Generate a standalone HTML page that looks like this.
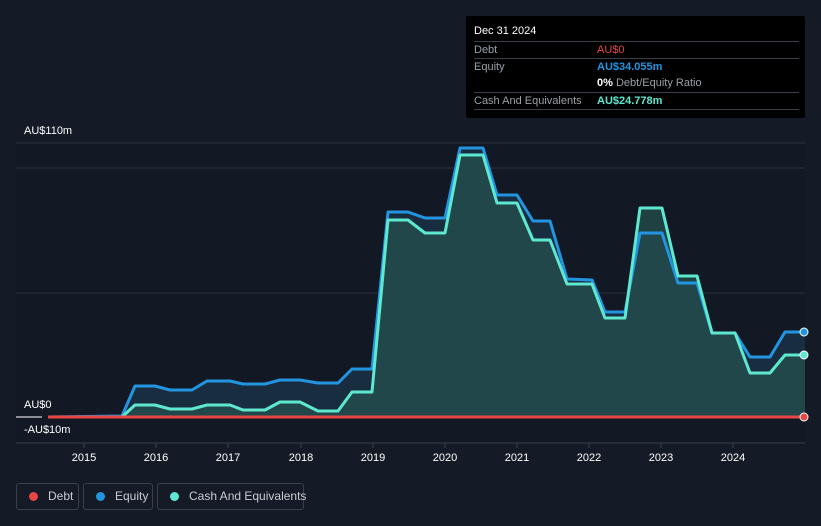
<!DOCTYPE html>
<html><head><style>
body{margin:0;background:#151b26;font-family:"Liberation Sans",sans-serif;}
.wrap{position:relative;width:821px;height:526px;overflow:hidden;background:#151b26;}
.tip{position:absolute;left:466px;top:16px;width:339px;height:102px;background:#000;border-radius:2px;color:#fff;font-size:11px;}
.tip .r{position:absolute;left:8px;right:6px;border-top:1px solid #3a3f47;height:17px;line-height:17px;color:#9aa0a8;white-space:nowrap;}
.leg{position:absolute;top:483px;height:27px;border:1px solid #3a404b;border-radius:3px;color:#c8ccd2;font-size:12px;line-height:25px;box-sizing:border-box;white-space:nowrap;}
.leg i{display:inline-block;width:9px;height:9px;border-radius:50%;margin:0 10px 0 12px;vertical-align:-1px;}
.lbl{position:absolute;color:#fff;font-size:11px;}
</style></head><body><div class="wrap">
<svg width="821" height="526" style="position:absolute;left:0;top:0">
<rect x="16" y="143" width="789" height="300" fill="#131924"/>
<line x1="16" y1="143" x2="805" y2="143" stroke="#2c323c"/>
<line x1="16" y1="168" x2="805" y2="168" stroke="#2c323c"/>
<line x1="16" y1="293" x2="805" y2="293" stroke="#2c323c"/>
<line x1="16" y1="443" x2="805" y2="443" stroke="#3a404a"/>
<line x1="16" y1="417" x2="42" y2="417" stroke="#fff"/>
<g stroke="#3a404a"><line x1="84" y1="443" x2="84" y2="448"/><line x1="156" y1="443" x2="156" y2="448"/><line x1="228" y1="443" x2="228" y2="448"/><line x1="301" y1="443" x2="301" y2="448"/><line x1="373" y1="443" x2="373" y2="448"/><line x1="445" y1="443" x2="445" y2="448"/><line x1="517" y1="443" x2="517" y2="448"/><line x1="589" y1="443" x2="589" y2="448"/><line x1="661" y1="443" x2="661" y2="448"/><line x1="733" y1="443" x2="733" y2="448"/></g>
<polygon fill="#1c3247" fill-opacity="0.8" points="48,417 122,416 135,386 155,386 170,390 192,390 207,381 230,381 243,384 265,384 280,380 300,380 318,383 338,383 352,369 372,369 388,212 408,212 425,218 445,218 460,148 483,148 497,195 517,195 533,221 550,221 567,279 592,280 605,312 625,312 640,233 662,233 678,283 697,283 712,333 735,333 750,357 770,357 785,332 805,332 805,417"/>
<polygon fill="#25524f" fill-opacity="0.7" points="48,417 122,417 135,405 155,405 170,409 192,409 207,405 230,405 243,410 265,410 280,402 300,402 318,411 338,411 352,392 372,392 388,220 408,220 425,233 445,233 460,155 483,155 497,203 517,203 533,240 550,240 567,284 592,284 605,318 625,318 640,208 662,208 678,276 697,276 712,333 735,333 750,373 770,373 785,355 805,355 805,417"/>
<polyline fill="none" stroke="#2394e0" stroke-width="3" stroke-linejoin="round" points="48,417 122,416 135,386 155,386 170,390 192,390 207,381 230,381 243,384 265,384 280,380 300,380 318,383 338,383 352,369 372,369 388,212 408,212 425,218 445,218 460,148 483,148 497,195 517,195 533,221 550,221 567,279 592,280 605,312 625,312 640,233 662,233 678,283 697,283 712,333 735,333 750,357 770,357 785,332 805,332"/>
<polyline fill="none" stroke="#5ee8d0" stroke-width="3" stroke-linejoin="round" points="48,417 122,417 135,405 155,405 170,409 192,409 207,405 230,405 243,410 265,410 280,402 300,402 318,411 338,411 352,392 372,392 388,220 408,220 425,233 445,233 460,155 483,155 497,203 517,203 533,240 550,240 567,284 592,284 605,318 625,318 640,208 662,208 678,276 697,276 712,333 735,333 750,373 770,373 785,355 805,355"/>
<line x1="48" y1="417" x2="805" y2="417" stroke="#e84545" stroke-width="3"/>
<circle cx="804" cy="332" r="4" fill="#2394e0" stroke="#fff" stroke-width="1"/>
<circle cx="804" cy="355" r="4" fill="#5ee8d0" stroke="#fff" stroke-width="1"/>
<circle cx="804" cy="417" r="4" fill="#e84545" stroke="#fff" stroke-width="1"/>
<g fill="#fff" font-size="11" font-family="Liberation Sans" text-anchor="middle"><text x="84" y="461">2015</text><text x="156" y="461">2016</text><text x="228" y="461">2017</text><text x="301" y="461">2018</text><text x="373" y="461">2019</text><text x="445" y="461">2020</text><text x="517" y="461">2021</text><text x="589" y="461">2022</text><text x="661" y="461">2023</text><text x="733" y="461">2024</text></g>
</svg>
<div class="lbl" style="left:24px;top:125px">AU$110m</div>
<div class="lbl" style="left:24px;top:399px">AU$0</div>
<div class="lbl" style="left:24px;top:424px">-AU$10m</div>
<div class="tip">
<div style="position:absolute;left:8px;top:9px">Dec 31 2024</div>
<div class="r" style="top:25px">Debt<span style="position:absolute;left:123px;color:#e84545">AU$0</span></div>
<div class="r" style="top:42px">Equity<span style="position:absolute;left:123px;color:#2394e0;font-weight:bold">AU$34.055m</span></div>
<div class="r" style="top:59px;border:0"><span style="position:absolute;left:123px"><b style="color:#fff">0%</b> Debt/Equity Ratio</span></div>
<div class="r" style="top:76px">Cash And Equivalents<span style="position:absolute;left:123px;color:#5ee8d0;font-weight:bold">AU$24.778m</span></div>
<div class="r" style="top:93px;height:0"></div>
</div>
<div class="leg" style="left:16px;width:63px"><i style="background:#e84545"></i>Debt</div>
<div class="leg" style="left:83px;width:70px"><i style="background:#2394e0"></i>Equity</div>
<div class="leg" style="left:157px;width:147px"><i style="background:#5ee8d0"></i>Cash And Equivalents</div>
</div></body></html>
